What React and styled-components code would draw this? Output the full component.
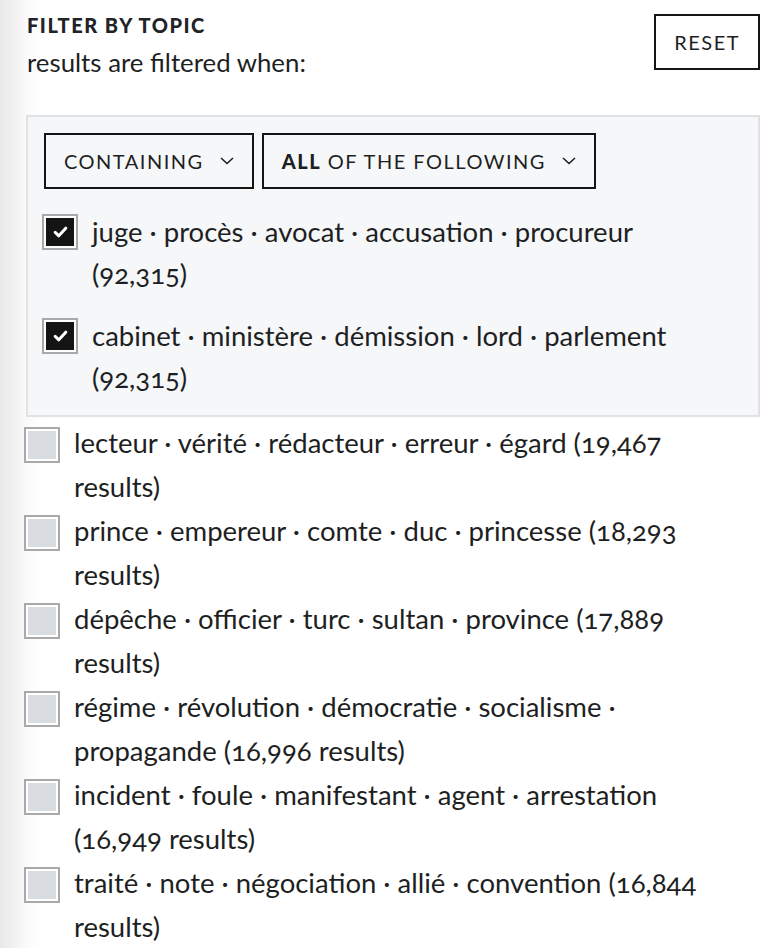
import React from 'react';
import styled, { createGlobalStyle } from 'styled-components';

const GlobalStyle = createGlobalStyle`
  body {
    margin: 0;
    background: linear-gradient(to right, #e8e8e8 0, #fbfbfb 28px, #fff 44px);
    font-family: Lato, "Open Sans", sans-serif;
    color: #1e1f23;
    font-variant-numeric: oldstyle-nums;
  }
`;

const Page = styled.div`
  width: 736px;
  padding: 14px 20px 20px 24px;
`;

const Header = styled.div`
  display: flex;
  justify-content: space-between;
  align-items: flex-start;
`;

const TitleBlock = styled.div`
  margin-left: 3px;
`;

const Title = styled.div`
  font-size: 20px;
  line-height: 22px;
  font-weight: 900;
  letter-spacing: 1.5px;
  color: #222327;
`;

const Subtitle = styled.div`
  margin-top: 11px;
  font-size: 25.8px;
  line-height: 30px;
`;

const OutlineButton = styled.button`
  height: 56px;
  display: inline-flex;
  align-items: center;
  gap: 16px;
  padding: 0 18px;
  border: 2px solid #151515;
  background: transparent;
  font-family: inherit;
  font-size: 20px;
  letter-spacing: 1.5px;
  color: #1e1f23;
  text-transform: uppercase;
  cursor: pointer;

  b {
    font-weight: 900;
  }
`;

const Panel = styled.div`
  margin: 38px 0 0 2px;
  padding: 16px;
  background: #f6f7f9;
  border: 2px solid #dfe3e7;
`;

const SelectRow = styled.div`
  display: flex;
  gap: 8px;
`;

const List = styled.div`
  display: flex;
  flex-direction: column;
  gap: ${(p) => p.$gap || 0}px;
  margin: ${(p) => p.$top || 0}px 0 0 ${(p) => p.$left || 0}px;
`;

const Item = styled.label`
  display: flex;
  align-items: flex-start;
  gap: 14px;
  cursor: pointer;
`;

const Box = styled.span`
  flex: none;
  width: 36px;
  height: 36px;
  box-sizing: border-box;
  margin-top: ${(p) => p.$top}px;
  border: 2px solid #a9a9a9;
  padding: 2px;
  background: #fff;

  span {
    display: flex;
    align-items: center;
    justify-content: center;
    width: 100%;
    height: 100%;
    background: ${(p) => (p.$checked ? '#141414' : '#d9dde2')};
  }
`;

const Text = styled.span`
  max-width: ${(p) => p.$width}px;
  font-size: 27.5px;
  line-height: ${(p) => p.$line}px;
`;

const Chevron = () => (
  <svg width="14" height="8" viewBox="0 0 14 8" fill="none">
    <path d="M1 1l6 5.5L13 1" stroke="#1e1f23" strokeWidth="1.6" />
  </svg>
);

const Check = () => (
  <svg width="15" height="12" viewBox="0 0 15 12" fill="none">
    <path
      d="M2.2 6.4l3.6 3.4L12.8 2.2"
      stroke="#fff"
      strokeWidth="3"
      strokeLinecap="round"
      strokeLinejoin="round"
    />
  </svg>
);

const selected = [
  'juge · procès · avocat · accusation · procureur (92,315)',
  'cabinet · ministère · démission · lord · parlement (92,315)',
];

const topics = [
  'lecteur · vérité · rédacteur · erreur · égard (19,467 results)',
  'prince · empereur · comte · duc · princesse (18,293 results)',
  'dépêche · officier · turc · sultan · province (17,889 results)',
  'régime · révolution · démocratie · socialisme · propagande (16,996 results)',
  'incident · foule · manifestant · agent · arrestation (16,949 results)',
  'traité · note · négociation · allié · convention (16,844 results)',
];

const TopicRow = ({ label, checked, width, line, top }) => (
  <Item>
    <Box $checked={checked} $top={top}>
      <span>{checked && <Check />}</span>
    </Box>
    <Text $width={width} $line={line}>{label}</Text>
  </Item>
);

export default function App() {
  return (
    <>
      <GlobalStyle />
      <Page>
        <Header>
          <TitleBlock>
            <Title>FILTER BY TOPIC</Title>
            <Subtitle>results are filtered when:</Subtitle>
          </TitleBlock>
          <OutlineButton>Reset</OutlineButton>
        </Header>

        <Panel>
          <SelectRow>
            <OutlineButton>
              Containing <Chevron />
            </OutlineButton>
            <OutlineButton>
              <span>
                <b>All</b> of the following
              </span>
              <Chevron />
            </OutlineButton>
          </SelectRow>
          <List $top={22} $gap={20} $left={-2}>
            {selected.map((t) => (
              <TopicRow key={t} label={t} checked width={622} line={42} top={3} />
            ))}
          </List>
        </Panel>

        <List $top={4}>
          {topics.map((t) => (
            <TopicRow key={t} label={t} width={638} line={44} top={6} />
          ))}
        </List>
      </Page>
    </>
  );
}
